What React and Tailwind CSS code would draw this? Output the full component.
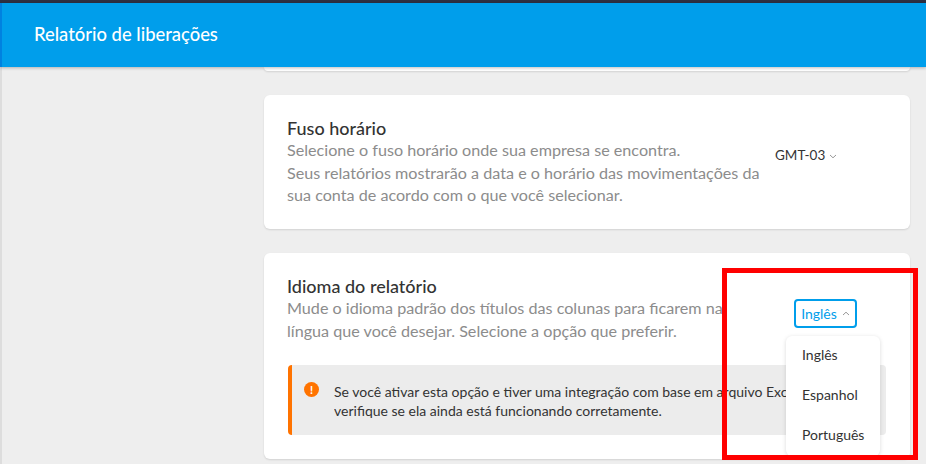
import React from "react";

const font = "font-['Lato','Noto_Sans',sans-serif]";

function Card({ className = "", children }) {
  return <div className={`bg-white rounded-md shadow-[0_1px_2px_rgba(0,0,0,0.12)] ${className}`}>{children}</div>;
}

function Chevron({ up, className }) {
  return (
    <svg width="8" height="5" viewBox="0 0 8 5" fill="none" className={className}>
      <path d={up ? "M1 4L4 1.2L7 4" : "M1 1L4 3.8L7 1"} stroke="#999" strokeWidth="1" />
    </svg>
  );
}

function Warning() {
  return (
    <div className="w-[15px] h-[15px] rounded-full bg-[#ff7300] text-white text-[11px] font-bold leading-[15px] text-center shrink-0">!</div>
  );
}

export default function App() {
  const options = ["Inglês", "Espanhol", "Português"];
  return (
    <div className={`relative w-[926px] h-[464px] overflow-hidden bg-[#eeeeee] ${font}`}>
      <div className="h-[3px] bg-[#2d3042]" />
      <header className="relative z-10 h-[64px] bg-[#009eeb] border-l-2 border-[#0082e0] flex items-center pl-[32px] shadow-[0_1px_3px_rgba(0,0,0,0.25)]">
        <h1 className="text-[18.4px] font-medium text-white">Relatório de liberações</h1>
      </header>

      <main className="h-[397px] border-l-2 border-[#dddddd] pl-[262px] pr-[16px] flex flex-col gap-[24px]">
        <Card className="h-[4px] shrink-0 rounded-t-none" />

        <Card className="h-[134px] shrink-0 pl-[23px] pt-[23px] flex">
          <div className="w-[479px]">
            <h2 className="mb-[1px] text-[18px] leading-[20px] font-medium text-[#333333]">Fuso horário</h2>
            <p className="text-[16.15px] leading-[22.5px] text-[#8c8c8c]">
              Selecione o fuso horário onde sua empresa se encontra.
              <br />
              Seus relatórios mostrarão a data e o horário das movimentações da
              <br />
              sua conta de acordo com o que você selecionar.
            </p>
          </div>
          <div className="ml-[9px] h-[24px] mt-[25px] flex items-center gap-[4px] text-[13.5px] text-[#333333]">
            GMT-03 <Chevron className="mt-[3px]" />
          </div>
        </Card>

        <Card className="h-[206px] shrink-0 pl-[24px] pt-[23px]">
          <div className="flex">
            <div className="-ml-[1px] w-[480px]">
              <h2 className="mb-[1px] text-[18px] leading-[20px] font-medium text-[#333333]">Idioma do relatório</h2>
              <p className="text-[16.15px] leading-[22.5px] text-[#8c8c8c] whitespace-nowrap">
                Mude o idioma padrão dos títulos das colunas para ficarem na
                <br />
                língua que você desejar. Selecione a opção que preferir.
              </p>
            </div>
            <div className="ml-[27px] mt-[23px] w-[63px] h-[29px] border-2 border-[#009eeb] rounded flex items-center justify-center gap-[5px] text-[14px] text-[#009eeb] shrink-0">
              Inglês <Chevron up />
            </div>
          </div>
          <div className="mt-[23px] w-[598px] h-[70px] bg-[#ececec] rounded border-l-4 border-[#ff7300] pl-[12px] pt-[17px] flex gap-[15px]">
            <Warning />
            <p className="text-[14px] leading-[19px] text-[#333333] whitespace-nowrap overflow-hidden">
              Se você ativar esta opção e tiver uma integração com base em arquivo Excel,
              <br />
              verifique se ela ainda está funcionando corretamente.
            </p>
          </div>
        </Card>
      </main>

      <ul className="absolute left-[786px] top-[336px] w-[94px] h-[120px] bg-white rounded-md shadow-[0_1px_4px_rgba(0,0,0,0.15)] pl-[16px] text-[14px] text-[#333333]">
        {options.map(o => <li key={o} className="h-[40px] pb-[3px] flex items-center">{o}</li>)}
      </ul>

      {/* marcação vermelha */}
      <div className="absolute left-[722px] top-[268px] w-[196px] h-[192px] border-[5px] border-[#ff0000]" />
    </div>
  );
}
